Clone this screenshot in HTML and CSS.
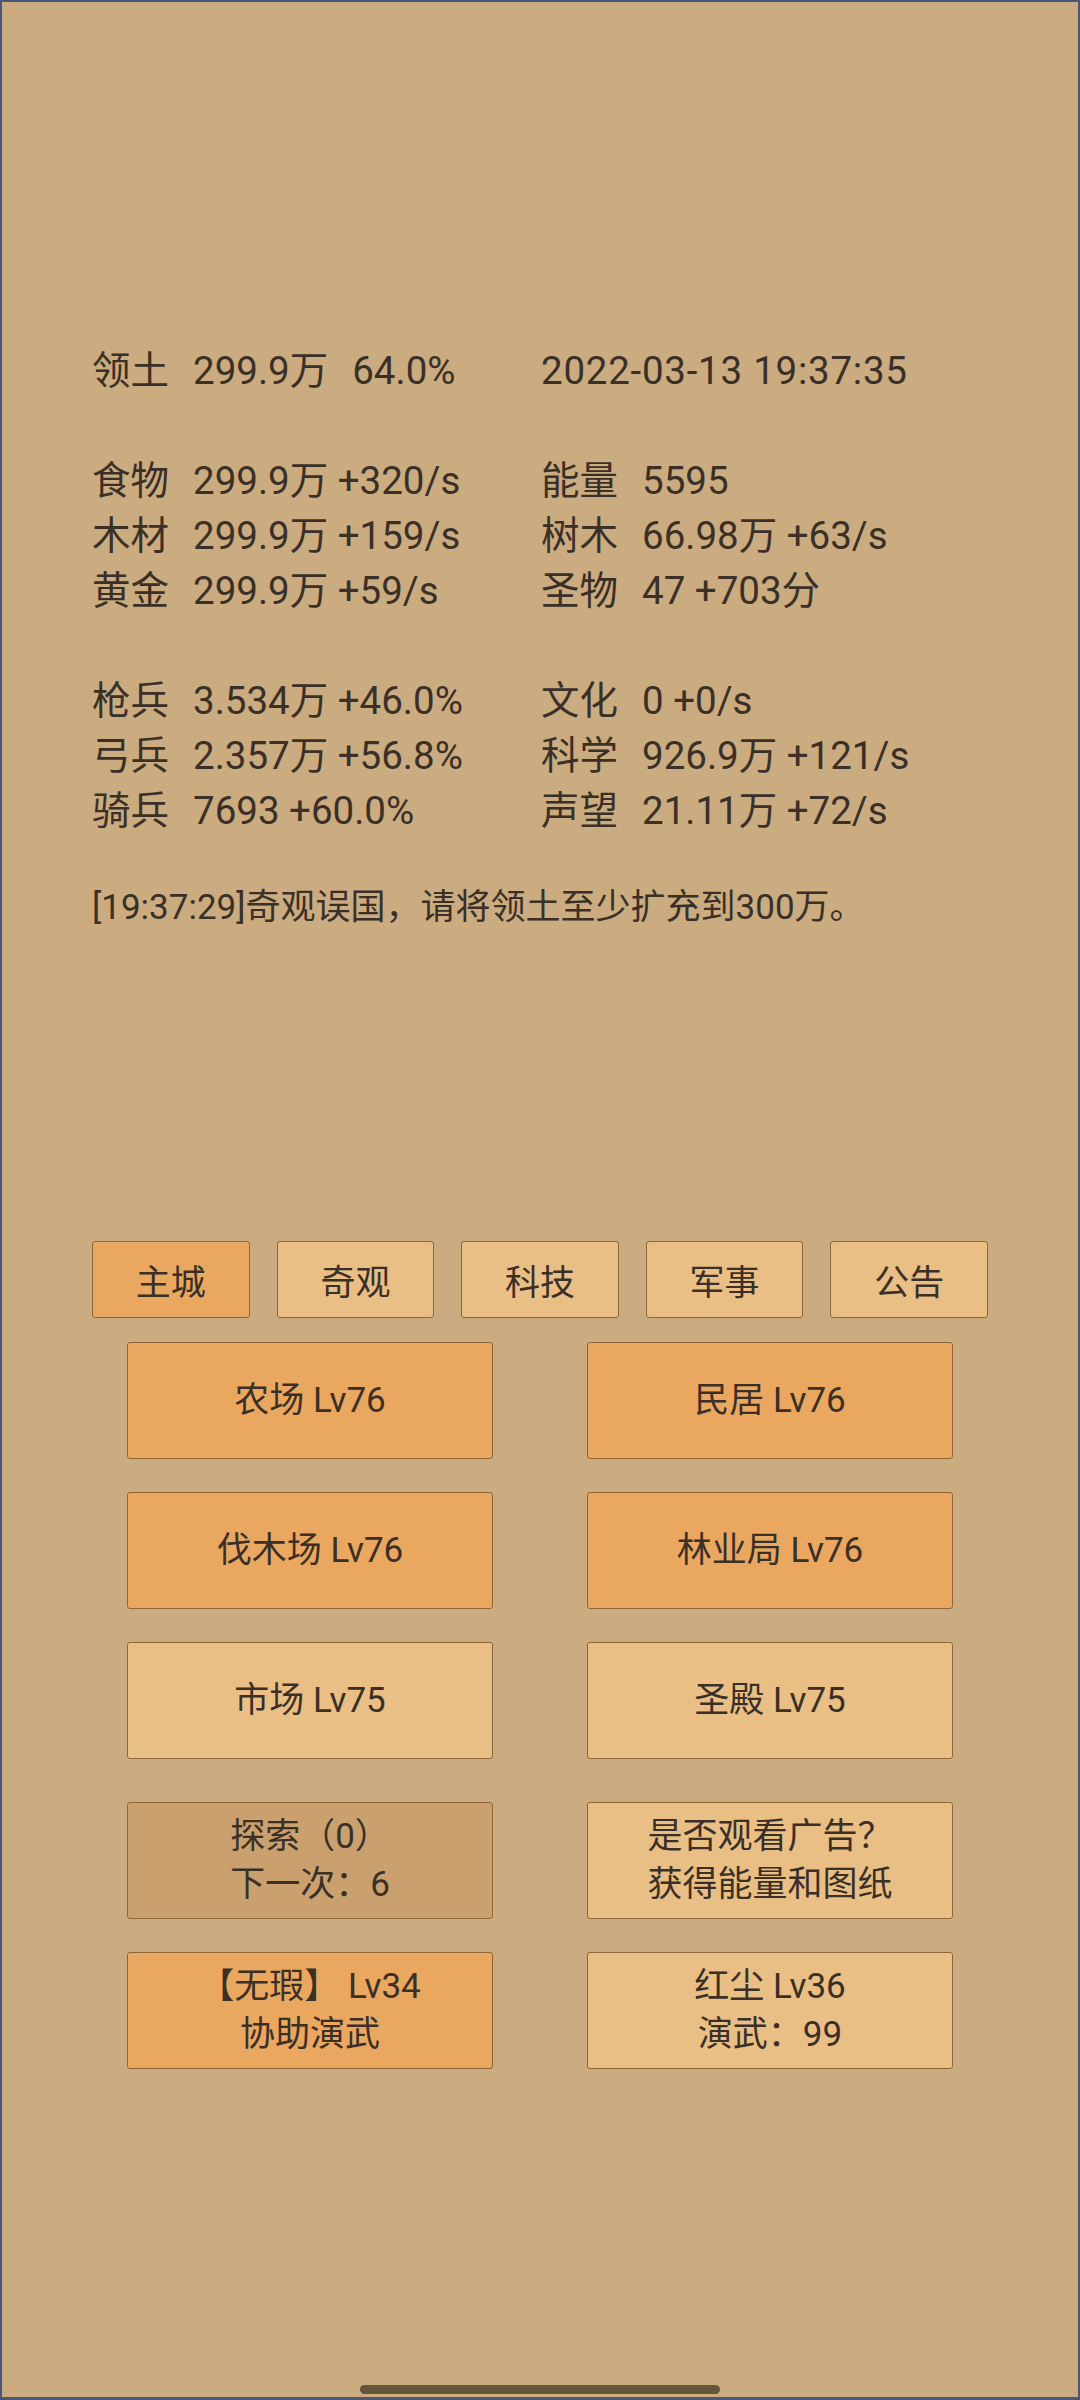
FILE: index.html
```html
<!DOCTYPE html>
<html lang="zh-CN">
<head>
<meta charset="utf-8">
<title>主城</title>
<link rel="stylesheet" href="styles.css">
</head>
<body>
<main class="screen">
  <section class="stats">
    <div class="group">
      <div class="cell"><span class="label">领土</span><span class="value">299.9万</span><span class="value pct">64.0%</span></div>
      <div class="cell"><span class="value date">2022-03-13 19:37:35</span></div>
    </div>
    <div class="group">
      <div class="cell"><span class="label">食物</span><span class="value">299.9万 +320/s</span></div>
      <div class="cell"><span class="label">能量</span><span class="value">5595</span></div>
      <div class="cell"><span class="label">木材</span><span class="value">299.9万 +159/s</span></div>
      <div class="cell"><span class="label">树木</span><span class="value">66.98万 +63/s</span></div>
      <div class="cell"><span class="label">黄金</span><span class="value">299.9万 +59/s</span></div>
      <div class="cell"><span class="label">圣物</span><span class="value">47 +703分</span></div>
    </div>
    <div class="group">
      <div class="cell"><span class="label">枪兵</span><span class="value">3.534万 +46.0%</span></div>
      <div class="cell"><span class="label">文化</span><span class="value">0 +0/s</span></div>
      <div class="cell"><span class="label">弓兵</span><span class="value">2.357万 +56.8%</span></div>
      <div class="cell"><span class="label">科学</span><span class="value">926.9万 +121/s</span></div>
      <div class="cell"><span class="label">骑兵</span><span class="value">7693 +60.0%</span></div>
      <div class="cell"><span class="label">声望</span><span class="value">21.11万 +72/s</span></div>
    </div>
    <p class="message">[19:37:29]奇观误国，请将领土至少扩充到300万。</p>
  </section>

  <nav class="tabs">
    <div class="tab active">主城</div>
    <div class="tab">奇观</div>
    <div class="tab">科技</div>
    <div class="tab">军事</div>
    <div class="tab">公告</div>
  </nav>

  <section class="buildings">
    <div class="btn orange">农场 Lv76</div>
    <div class="btn orange">民居 Lv76</div>
    <div class="btn orange">伐木场 Lv76</div>
    <div class="btn orange">林业局 Lv76</div>
    <div class="btn light">市场 Lv75</div>
    <div class="btn light">圣殿 Lv75</div>
  </section>

  <section class="buildings extra">
    <div class="btn dim">探索（0）<br>下一次：6</div>
    <div class="btn light">是否观看广告？<br>获得能量和图纸</div>
    <div class="btn orange">【无瑕】 Lv34<br>协助演武</div>
    <div class="btn light">红尘 Lv36<br>演武：99</div>
  </section>

  <div class="home-bar"></div>
</main>
</body>
</html>
```

FILE: styles.css
```css
* {
  box-sizing: border-box;
}

html, body {
  margin: 0;
  padding: 0;
}

body {
  background: #cbab80;
  font-family: Roboto, "Noto Sans CJK SC", sans-serif;
  color: #3a3027;
}

.screen {
  width: 1080px;
  height: 2400px;
  border-top: 2px solid #4d5676;
  border-left: 2px solid #4d5676;
  border-right: 2px solid #4d5676;
  border-bottom: 3px solid #4d5676;
  display: flex;
  flex-direction: column;
  padding-top: 341px;
}

.stats {
  padding-left: 90px;
}

.group {
  display: grid;
  grid-template-columns: 449px 1fr;
  font-size: 38.5px;
  line-height: 55px;
}

.group + .group {
  margin-top: 55px;
}

.cell {
  display: flex;
  white-space: nowrap;
}

.label {
  width: 101px;
  flex: none;
}

.pct {
  margin-left: 24px;
}

.date {
  letter-spacing: 0.75px;
}

.message {
  margin: 46px 0 0;
  font-size: 35px;
  line-height: 48px;
  white-space: nowrap;
}

.tabs {
  display: flex;
  gap: 27px;
  padding: 0 90px;
  margin-top: 309px;
}

.tab {
  flex: 1;
  height: 77px;
  display: flex;
  align-items: center;
  justify-content: center;
  font-size: 35px;
  background: #e9bf85;
  border: 1.5px solid #8e6638;
  border-radius: 3px;
}

.tab.active {
  background: #eaa760;
}

.buildings {
  display: grid;
  grid-template-columns: 366px 366px;
  column-gap: 94px;
  row-gap: 33px;
  justify-content: center;
  margin-top: 24px;
}

.buildings.extra {
  margin-top: 43px;
}

.btn {
  height: 117px;
  display: flex;
  align-items: center;
  justify-content: center;
  text-align: center;
  font-size: 35px;
  line-height: 48px;
  border: 1.5px solid #8e6638;
  border-radius: 3px;
}

.btn.orange {
  background: #eaa760;
}

.btn.light {
  background: #e9bf85;
}

.btn.dim {
  background: #c9a06e;
}

.home-bar {
  margin-top: auto;
  margin-bottom: 3px;
  align-self: center;
  width: 360px;
  height: 9px;
  border-radius: 5px;
  background: #64563c;
}
```
